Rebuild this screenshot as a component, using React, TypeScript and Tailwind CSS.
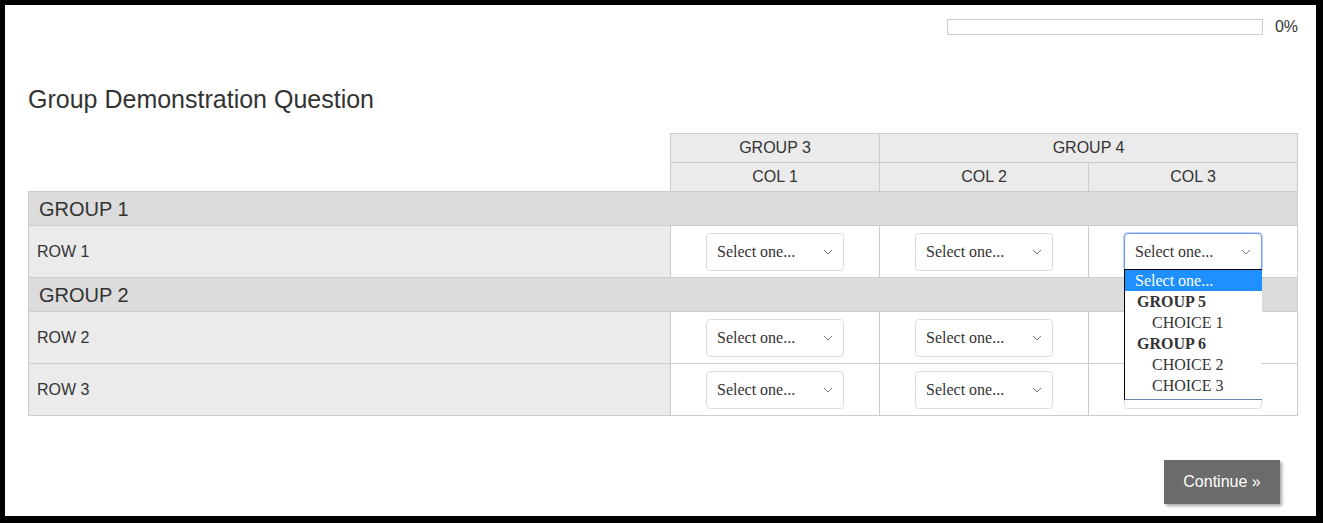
import React from 'react';

const columns = ['COL 1', 'COL 2', 'COL 3'];

const groups = [
  { name: 'GROUP 1', rows: ['ROW 1'] },
  { name: 'GROUP 2', rows: ['ROW 2', 'ROW 3'] },
];

const Chevron: React.FC = () => (
  <svg width="10" height="6" viewBox="0 0 10 6" fill="none" className="shrink-0">
    <path d="M1 1l4 4 4-4" stroke="#777" strokeWidth="1" />
  </svg>
);

const FakeSelect: React.FC<{ open?: boolean; covered?: boolean }> = ({ open, covered }) => (
  <div className="relative w-[138px]">
    <div
      className={`flex h-[38px] items-center justify-between rounded-[4px] bg-white pl-[10px] pr-[10px] text-[16px] text-[#333] ${
        open
          ? 'border border-[#6f9ced] shadow-[0_0_0_1px_rgba(111,156,237,0.45)]'
          : 'border border-[#dddddd]'
      }`}
      style={{ fontFamily: '"Liberation Serif", "Times New Roman", serif' }}
    >
      {/* hidden under the open list in the screenshot */}
      {!covered && (
        <>
          <span>Select one...</span>
          <Chevron />
        </>
      )}
    </div>
    {open && (
      <div
        className="absolute left-0 top-[36px] z-10 w-[138px] border-l border-t border-b border-l-black border-t-black border-b-[#6e85ad] bg-white pb-[3px] text-[16px] text-[#333]"
        style={{ fontFamily: '"Liberation Serif", "Times New Roman", serif' }}
      >
        <div className="h-[21px] bg-[#1e90ff] pl-[10px] leading-[21px] text-white">Select one...</div>
        <div className="h-[21px] pl-[12px] font-bold leading-[21px]">GROUP 5</div>
        <div className="h-[21px] pl-[27px] leading-[21px]">CHOICE 1</div>
        <div className="h-[21px] pl-[12px] font-bold leading-[21px]">GROUP 6</div>
        <div className="h-[21px] pl-[27px] leading-[21px]">CHOICE 2</div>
        <div className="h-[21px] pl-[27px] leading-[21px]">CHOICE 3</div>
      </div>
    )}
  </div>
);

const App: React.FC = () => {
  return (
    <div
      className="h-[523px] w-[1323px] border-b-[7px] border-l-[5px] border-r-[7px] border-t-[5px] border-black bg-white pl-[23px] pr-[18px] pt-[14px] text-[#333]"
      style={{ fontFamily: '"Liberation Sans", Arial, sans-serif' }}
    >
      {/* Progress */}
      <div className="flex h-[16px] items-center justify-end">
        <div className="h-[16px] w-[316px] border border-[#cccccc] bg-white"></div>
        <span className="ml-[12px] text-[16px] leading-[16px]">0%</span>
      </div>

      <h1 className="mt-[50px] h-[28px] text-[25px] font-normal leading-[28px]">Group Demonstration Question</h1>

      {/* Matrix */}
      <table className="mt-[20px] w-[1270px] table-fixed border-collapse text-[16px]">
        <colgroup>
          <col className="w-[642px]" />
          <col className="w-[209px]" />
          <col className="w-[209px]" />
          <col className="w-[209px]" />
        </colgroup>
        <thead>
          <tr className="h-[29px]">
            <td></td>
            <td className="border border-[#cccccc] bg-[#ebebeb] p-0 text-center">GROUP 3</td>
            <td colSpan={2} className="border border-[#cccccc] bg-[#ebebeb] p-0 text-center">GROUP 4</td>
          </tr>
          <tr className="h-[29px]">
            <td></td>
            {columns.map((c) => (
              <td key={c} className="border border-[#cccccc] bg-[#ebebeb] p-0 text-center">{c}</td>
            ))}
          </tr>
        </thead>
        <tbody>
          {groups.map((g) => (
            <React.Fragment key={g.name}>
              <tr className="h-[34px]">
                <td colSpan={4} className="border border-[#cccccc] bg-[#dcdcdc] p-0 pl-[10px] text-[20px] leading-[22px]">{g.name}</td>
              </tr>
              {g.rows.map((r) => (
                <tr key={r} className="h-[52px]">
                  <td className="border border-[#cccccc] bg-[#ebebeb] p-0 pl-[8px]">{r}</td>
                  {columns.map((c, ci) => (
                    <td key={c} className="border border-[#cccccc] bg-white p-0">
                      <div className="flex justify-center">
                        <FakeSelect
                          open={r === 'ROW 1' && ci === 2}
                          covered={r !== 'ROW 1' && ci === 2}
                        />
                      </div>
                    </td>
                  ))}
                </tr>
              ))}
            </React.Fragment>
          ))}
        </tbody>
      </table>

      <div className="mr-[18px] mt-[44px] flex justify-end">
        <button className="h-[44px] w-[116px] bg-[#6b6b6b] text-[16px] text-white shadow-[2px_2px_3px_rgba(0,0,0,0.35)]">
          Continue »
        </button>
      </div>
    </div>
  );
};

export default App;
